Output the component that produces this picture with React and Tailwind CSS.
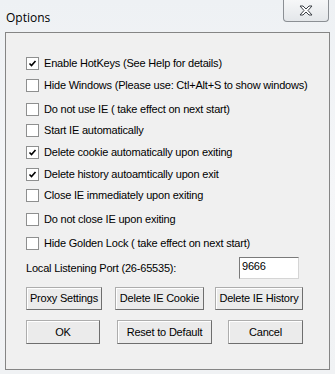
import React from "react";

const options = [
  { label: "Enable HotKeys (See Help for details)", checked: true, mt: "mt-[24px]" },
  { label: "Hide Windows (Please use: Ctl+Alt+S to show windows)", checked: false, mt: "mt-[9px]" },
  { label: "Do not use IE ( take effect on next start)", checked: false, mt: "mt-[11px]" },
  { label: "Start IE automatically", checked: false, mt: "mt-[8px]" },
  { label: "Delete cookie automatically upon exiting", checked: true, mt: "mt-[9px]" },
  { label: "Delete history autoamtically upon exit", checked: true, mt: "mt-[9px]" },
  { label: "Close IE immediately upon exiting", checked: false, mt: "mt-[8px]" },
  { label: "Do not close IE upon exiting", checked: false, mt: "mt-[11px]" },
  { label: "Hide Golden Lock ( take effect on next start)", checked: false, mt: "mt-[11px]" },
];

const CheckBox = ({ checked }) => (
  <div className="w-[13px] h-[13px] shrink-0 bg-white border border-[#8e8f8f] flex items-center justify-center">
    {checked && (
      <svg width="9" height="9" viewBox="0 0 9 9">
        <path d="M1.5 4.5 L3.5 6.5 L7.5 2" stroke="#000" strokeWidth="1.6" fill="none" />
      </svg>
    )}
  </div>
);

const Btn = ({ children, className }) => (
  <button
    className={`h-full bg-[#ebebeb] border border-[#adadad] border-r-[#6e6e6e] border-b-[#6e6e6e] shadow-[inset_1px_1px_0_#fff] text-[11px] tracking-[-0.2px] text-black ${className}`}
  >
    {children}
  </button>
);

export default function App() {
  return (
    <div
      className="w-[335px] h-[374px] relative overflow-hidden bg-gradient-to-b from-[#eef1f4] via-[#f5f6f8] to-[#f0f2f4] flex flex-col"
      style={{ fontFamily: '"Liberation Sans", Arial, sans-serif' }}
    >
      {/* Title bar */}
      <div className="h-[32px] shrink-0 flex items-start justify-between">
        <span
          className="ml-[6px] mt-[9px] text-[12px] text-black"
          style={{ fontFamily: '"Open Sans", "Noto Sans", sans-serif' }}
        >
          Options
        </span>
        <div className="mr-[6px] w-[46px] h-[22px] rounded-b-[4px] border border-t-0 border-[#8b8f94] bg-gradient-to-b from-[#f6f7f8] to-[#e4e7ea] flex items-center justify-center">
          <svg width="14" height="11" viewBox="0 0 14 11">
            <path
              d="M1 1 H4 L7 4 L10 1 H13 L9 5.5 L13 10 H10 L7 7 L4 10 H1 L5 5.5 Z"
              fill="#fff"
              stroke="#3c4047"
              strokeWidth="1"
              strokeLinejoin="round"
            />
          </svg>
        </div>
      </div>

      {/* Client panel */}
      <div className="ml-[5px] w-[325px] h-[338px] border border-[#858585] bg-[#f0f0f0] px-[20px] text-[11px] tracking-[-0.2px] text-black">
        {options.map((o) => (
          <div key={o.label} className={`${o.mt} h-[13px] flex items-center`}>
            <CheckBox checked={o.checked} />
            <span className="ml-[5px] whitespace-nowrap leading-none">{o.label}</span>
          </div>
        ))}

        <div className="mt-[7px] h-[22px] flex items-center justify-between">
          <span className="whitespace-nowrap">Local Listening Port (26-65535):</span>
          <div className="mr-[10px] w-[60px] h-[22px] bg-white border border-[#7a7a7a] border-r-[#d5d5d5] border-b-[#d5d5d5] px-[2px] pt-[3px] leading-none">
            9666
          </div>
        </div>

        <div className="mt-[8px] h-[23px] flex">
          <Btn className="w-[76px]">Proxy Settings</Btn>
          <Btn className="ml-[13px] w-[89px]">Delete IE Cookie</Btn>
          <Btn className="ml-[11px] w-[88px]">Delete IE History</Btn>
        </div>

        <div className="mt-[10px] h-[24px] flex">
          <Btn className="w-[74px]">OK</Btn>
          <Btn className="ml-[17px] w-[95px]">Reset to Default</Btn>
          <Btn className="ml-[16px] w-[75px]">Cancel</Btn>
        </div>
      </div>
    </div>
  );
}
